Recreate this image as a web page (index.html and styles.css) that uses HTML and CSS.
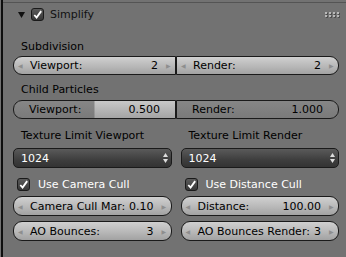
FILE: index.html
```html
<!DOCTYPE html>
<html lang="en">
<head>
    <meta charset="UTF-8">
    <title>Simplify</title>
    <link rel="stylesheet" href="styles.css">
</head>
<body>
    <div class="region">
        <div class="panel">
            <div class="panel-header">
                <svg class="disclosure" width="7" height="6" viewBox="0 0 7 6"><polygon points="0,0 7,0 3.5,6" fill="#111"/></svg>
                <span class="check"><svg width="12" height="12" viewBox="0 0 12 12"><path d="M2.5 6 L5 8.8 L10 1.8" fill="none" stroke="#fff" stroke-width="2"/></svg></span>
                <span class="panel-title">Simplify</span>
                <svg class="grip" width="15" height="6" viewBox="0 0 15 6">
                    <g fill="#4e4e4e">
                        <rect x="1" y="1" width="2" height="2"/><rect x="5" y="1" width="2" height="2"/><rect x="9" y="1" width="2" height="2"/><rect x="13" y="1" width="2" height="2"/>
                        <rect x="1" y="4" width="2" height="2"/><rect x="5" y="4" width="2" height="2"/><rect x="9" y="4" width="2" height="2"/><rect x="13" y="4" width="2" height="2"/>
                    </g>
                    <g fill="#b8b8b8">
                        <rect x="0" y="0" width="2" height="2"/><rect x="4" y="0" width="2" height="2"/><rect x="8" y="0" width="2" height="2"/><rect x="12" y="0" width="2" height="2"/>
                        <rect x="0" y="3" width="2" height="2"/><rect x="4" y="3" width="2" height="2"/><rect x="8" y="3" width="2" height="2"/><rect x="12" y="3" width="2" height="2"/>
                    </g>
                </svg>
            </div>
            <div class="panel-body">
                <div class="label first">Subdivision</div>
                <div class="row">
                    <div class="num join-left"><span class="arrow">&#9664;</span><span class="name">Viewport:</span><span class="value">2</span><span class="arrow">&#9654;</span></div>
                    <div class="num join-right"><span class="arrow">&#9664;</span><span class="name">Render:</span><span class="value">2</span><span class="arrow">&#9654;</span></div>
                </div>

                <div class="label second">Child Particles</div>
                <div class="row">
                    <div class="num slider join-left" style="--fill: 50%"><span class="name">Viewport:</span><span class="value">0.500</span></div>
                    <div class="num slider join-right" style="--fill: 100%"><span class="name">Render:</span><span class="value">1.000</span></div>
                </div>

                <div class="columns">
                    <div class="label third">Texture Limit Viewport</div>
                    <div class="label third">Texture Limit Render</div>

                    <div class="menu"><span class="name">1024</span>
                        <svg width="5" height="10" viewBox="0 0 5 10"><polygon points="0,4 2.5,0 5,4" fill="#ddd"/><polygon points="0,6 5,6 2.5,10" fill="#ddd"/></svg>
                    </div>
                    <div class="menu"><span class="name">1024</span>
                        <svg width="5" height="10" viewBox="0 0 5 10"><polygon points="0,4 2.5,0 5,4" fill="#ddd"/><polygon points="0,6 5,6 2.5,10" fill="#ddd"/></svg>
                    </div>

                    <div class="option"><span class="check"><svg width="12" height="12" viewBox="0 0 12 12"><path d="M2.5 6 L5 8.8 L10 1.8" fill="none" stroke="#fff" stroke-width="2"/></svg></span>Use Camera Cull</div>
                    <div class="option"><span class="check"><svg width="12" height="12" viewBox="0 0 12 12"><path d="M2.5 6 L5 8.8 L10 1.8" fill="none" stroke="#fff" stroke-width="2"/></svg></span>Use Distance Cull</div>

                    <div class="num round"><span class="arrow">&#9664;</span><span class="name">Camera Cull Mar:</span><span class="value">0.10</span><span class="arrow">&#9654;</span></div>
                    <div class="num round"><span class="arrow">&#9664;</span><span class="name">Distance:</span><span class="value">100.00</span><span class="arrow">&#9654;</span></div>

                    <div class="num round last"><span class="arrow">&#9664;</span><span class="name">AO Bounces:</span><span class="value">3</span><span class="arrow">&#9654;</span></div>
                    <div class="num round last"><span class="arrow">&#9664;</span><span class="name">AO Bounces Render:</span><span class="value">3</span><span class="arrow">&#9654;</span></div>
                </div>
            </div>
        </div>
    </div>
</body>
</html>
```

FILE: styles.css
```css
body {
    margin: 0;
    background-color: #727272;
    font-family: "DejaVu Sans", sans-serif;
    font-size: 11px;
    color: #000;
}
.region {
    margin-left: 1px;
    border-left: 2px solid #0e0e0e;
    height: 257px;
    overflow: hidden;
}
.panel {
    padding-top: 2px;
}
.panel-header {
    display: flex;
    align-items: center;
    height: 23px;
    border-top: 1px solid #545454;
    padding: 0 6px 0 15px;
}
.disclosure {
    margin-right: 6px;
}
.panel-header .check {
    width: 13px;
    height: 13px;
}
.panel-title {
    margin-left: 6px;
    color: #111;
}
.grip {
    margin-left: auto;
}
.panel-body {
    padding: 12px 7px 0 10px;
}
.label {
    height: 18px;
    line-height: 18px;
    padding-left: 8px;
}
.second {
    margin-top: 6px;
    margin-bottom: 1px;
}
.row {
    display: flex;
}
.num {
    flex: 1;
    display: flex;
    align-items: center;
    height: 17px;
    padding: 0 4px;
    border: 1px solid #1a1a1a;
    background: linear-gradient(#d0d0d0, #b8b8b8 55%, #a2a2a2);
    white-space: nowrap;
}
.num .arrow {
    font-size: 6px;
    color: #8e8e8e;
    width: 5px;
}
.num .name {
    margin-left: 7px;
}
.num .value {
    margin-left: auto;
    margin-right: 8px;
}
.join-left {
    border-radius: 9px 0 0 9px;
}
.join-right {
    border-radius: 0 9px 9px 0;
}
.round {
    border-radius: 9px;
}
.slider {
    padding: 0 15px;
    background:
        linear-gradient(#868686, #7a7a7a) no-repeat left / var(--fill) 100%,
        linear-gradient(#c8c8c8, #b4b4b4 55%, #a4a4a4);
}
.slider .name {
    margin-left: 0;
}
.slider .value {
    margin-right: 0;
}
.columns {
    display: grid;
    grid-template-columns: 1fr 1fr;
    column-gap: 9px;
    margin-top: 8px;
}
.menu {
    display: flex;
    align-items: center;
    height: 18px;
    margin-top: 3px;
    padding: 0 3px 0 7px;
    border: 1px solid #1a1a1a;
    border-radius: 5px;
    background: linear-gradient(#5a5a5a, #3e3e3e 60%, #333);
    color: #fff;
}
.menu svg {
    margin-left: auto;
}
.check {
    display: inline-flex;
    align-items: center;
    justify-content: center;
    box-sizing: border-box;
    width: 13px;
    height: 13px;
    border: 1px solid #1a1a1a;
    border-radius: 3px;
    background: linear-gradient(#5a5a5a, #383838);
}
.option {
    display: flex;
    align-items: center;
    height: 19px;
    margin-top: 7px;
    padding-left: 4px;
    color: #fff;
}
.option .check {
    margin-right: 8px;
}
.columns .round {
    margin-top: 2px;
    height: 18px;
}
.columns .last {
    margin-top: 5px;
}
```
